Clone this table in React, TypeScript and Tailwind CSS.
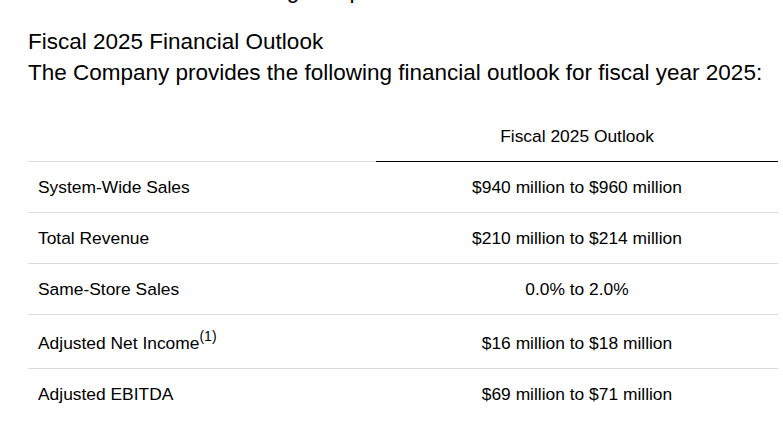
const rows = [
  { label: "System-Wide Sales", value: "$940 million to $960 million" },
  { label: "Total Revenue", value: "$210 million to $214 million" },
  { label: "Same-Store Sales", value: "0.0% to 2.0%" },
  { label: "Adjusted Net Income", value: "$16 million to $18 million", note: "(1)" },
  { label: "Adjusted EBITDA", value: "$69 million to $71 million" },
];

const App = () => {
  return (
    <div className="h-[424px] overflow-hidden bg-white pl-[28px] text-black font-['Liberation_Sans',Arial,sans-serif]">
      <p className="-mt-[25px] text-[22.5px] leading-[31px]">These results reflect strong and profitable unit economics.</p>

      <div className="mt-[20px] text-[22.5px] leading-[31px]">
        <h2>Fiscal 2025 Financial Outlook</h2>
        <p>The Company provides the following financial outlook for fiscal year 2025:</p>
      </div>

      <table className="mt-[23px] w-[750px] border-collapse text-[17.4px] leading-6">
        <thead>
          <tr>
            <th className="w-[348px] border-b border-[#dddddd]" />
            <th className="border-b border-black py-[13px] text-center font-normal">Fiscal 2025 Outlook</th>
          </tr>
        </thead>
        <tbody>
          {rows.map((r, i) => {
            const last = i === rows.length - 1;
            const pad = r.note ? "pt-[16px] pb-[13px]" : "py-[13px]";
            const border = last ? "" : "border-b border-[#dddddd]";
            return (
              <tr key={r.label}>
                <td className={`${pad} ${border} pl-[10px] text-left`}>
                  {r.label}
                  {r.note && <sup className="top-[-8px] text-[14px]">{r.note}</sup>}
                </td>
                <td className={`${pad} ${border} text-center`}>{r.value}</td>
              </tr>
            );
          })}
        </tbody>
      </table>
    </div>
  );
};

export default App;
